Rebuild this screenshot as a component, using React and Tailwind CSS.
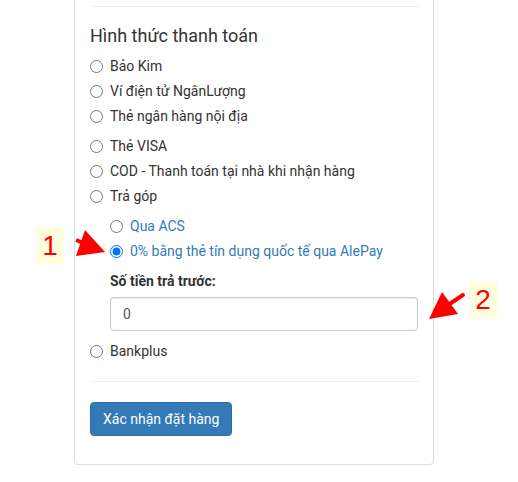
const options = ['Bảo Kim', 'Ví điện tử NgânLượng', 'Thẻ ngân hàng nội địa']
const options2 = ['Thẻ VISA', 'COD - Thanh toán tại nhà khi nhận hàng', 'Trả góp']

function Radio({ label, checked, sub }) {
  return (
    <label className={`flex items-center h-[25px] gap-[7px] ${sub ? 'text-[#337ab7]' : 'text-[#333]'}`}>
      <input type="radio" name={sub ? 'sub' : 'pay'} defaultChecked={checked} className="w-[13px] h-[13px] m-0" />
      <span>{label}</span>
    </label>
  )
}

export default function App() {
  return (
    <div
      className="relative w-[518px] h-[482px] overflow-hidden bg-white text-[14px]"
      style={{ fontFamily: 'Roboto, "Noto Sans", sans-serif' }}
    >
      {/* Payment card */}
      <div className="ml-[74px] -mt-[10px] w-[360px] border border-[#ddd] rounded-[4px] px-[15px] pt-[15px] pb-[28px]">
        <div className="h-px bg-[#eee]" />
        <h3 className="mt-[17px] text-[18px] leading-[24px] text-[#333]">Hình thức thanh toán</h3>

        <div className="mt-[6px]">
          {options.map((o) => <Radio key={o} label={o} />)}
        </div>
        <div className="mt-[5px]">
          {options2.map((o) => <Radio key={o} label={o} />)}
        </div>

        <div className="ml-[20px] mt-[5px]">
          <Radio sub label="Qua ACS" />
          <Radio sub checked label="0% bằng thẻ tín dụng quốc tế qua AlePay" />
          <div className="mt-[7px] font-bold text-[#333] leading-[20px]">Số tiền trả trước:</div>
          <input
            defaultValue="0"
            className="mt-[6px] block w-[308px] h-[34px] border border-[#ccc] rounded-[4px] px-[12px] text-[#555] shadow-[inset_0_1px_1px_rgba(0,0,0,0.075)]"
          />
        </div>

        <div className="mt-[8px]">
          <Radio label="Bankplus" />
        </div>

        <div className="mt-[17px] h-px bg-[#eee]" />

        <button className="mt-[20px] h-[34px] px-[12px] rounded-[4px] bg-[#337ab7] border border-[#2e6da4] text-white">
          Xác nhận đặt hàng
        </button>
      </div>

      {/* Annotation labels */}
      <div className="absolute left-[36px] top-[227px] w-[28px] h-[37px] bg-[#ffffe0] text-[#f00] text-[28px] leading-[37px] text-center" style={{ fontFamily: '"Liberation Sans", sans-serif' }}>
        1
      </div>
      <div className="absolute left-[469px] top-[281px] w-[28px] h-[37px] bg-[#ffffe0] text-[#f00] text-[28px] leading-[37px] text-center" style={{ fontFamily: '"Liberation Sans", sans-serif' }}>
        2
      </div>

      {/* Annotation arrows */}
      <svg className="absolute inset-0 pointer-events-none" width="518" height="482">
        <line x1="76" y1="240" x2="88" y2="245" stroke="#f00" strokeWidth="4" />
        <polygon points="85,230 76,256 105,252" fill="#f00" />
        <line x1="463" y1="295" x2="445" y2="307" stroke="#f00" strokeWidth="4" strokeLinecap="round" />
        <polygon points="442,292 458,314 429,319" fill="#f00" />
      </svg>
    </div>
  )
}
